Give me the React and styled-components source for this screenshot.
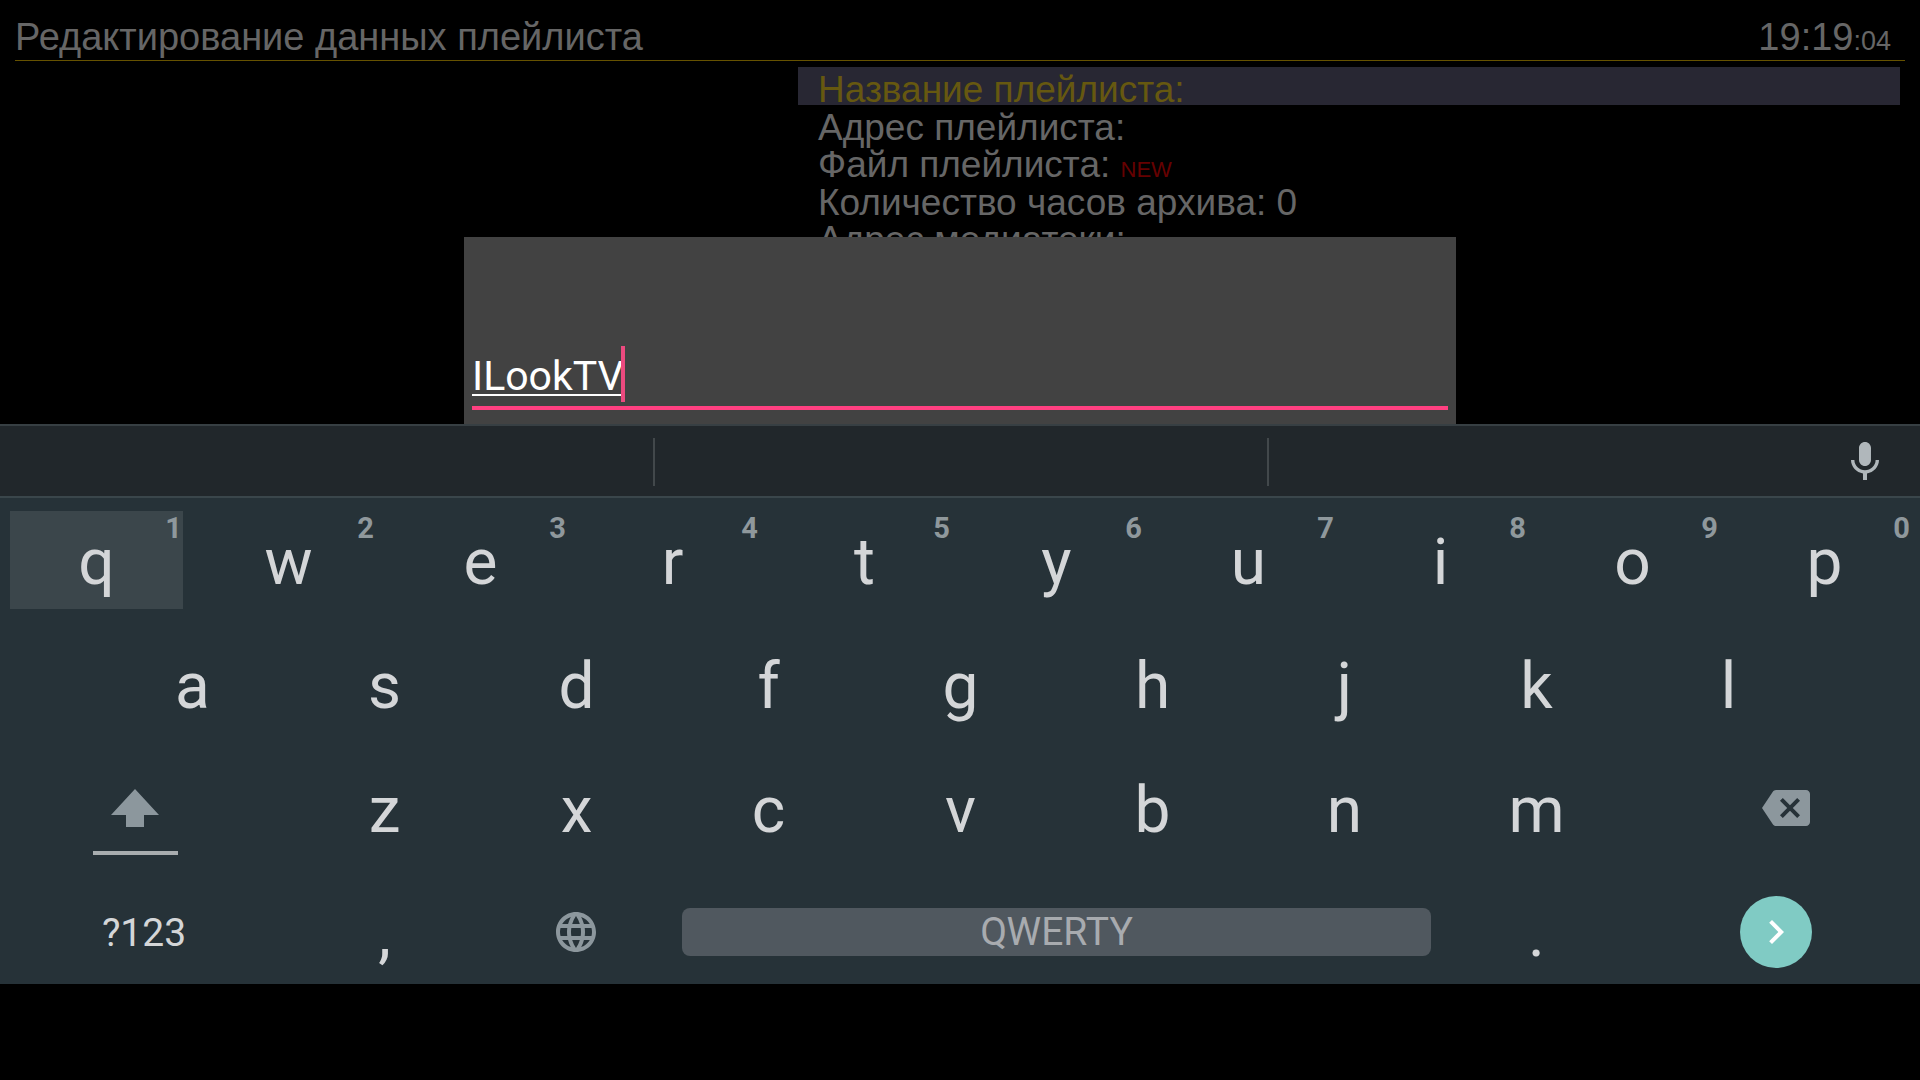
import React, { useState } from "react";
import styled, { createGlobalStyle } from "styled-components";

const GlobalStyle = createGlobalStyle`
  * { box-sizing: border-box; }
  body { margin: 0; background: #000; }
  button, input { font: inherit; color: inherit; background: none; border: 0; padding: 0; margin: 0; outline: none; }
`;

const Page = styled.div`
  display: flex;
  flex-direction: column;
  height: 100vh;
  padding-bottom: 96px;
  background: #000;
  overflow: hidden;
`;

const Backdrop = styled.main`
  position: relative;
  flex: 1;
  min-height: 0;
  overflow: hidden;
  color: #666;
  font-family: "Liberation Sans", Arial, sans-serif;
  font-size: 37px;
`;

const Header = styled.header`
  display: flex;
  justify-content: space-between;
  align-items: baseline;
  height: 61px;
  margin: 0 15px;
  padding-top: 16px;
  border-bottom: 1px solid #665200;
  font-size: 38px;
  line-height: 42px;
`;

const Title = styled.h1`
  margin: 0;
  font-size: 38px;
  font-weight: 400;
`;

const Clock = styled.time`
  padding-right: 14px;
`;

const Seconds = styled.span`
  font-size: 27px;
`;

const SettingsArea = styled.section`
  padding: 6px 20px 0 0;
`;

const SettingsList = styled.ul`
  display: grid;
  grid-template-rows: repeat(5, minmax(0, 1fr));
  height: 188px;
  margin: 0 0 0 42%;
  padding: 0;
  list-style: none;
`;

const Setting = styled.button`
  display: block;
  width: 100%;
  height: 100%;
  padding: 6px 0 0 20px;
  line-height: 34px;
  text-align: left;
  color: ${(p) => (p.$selected ? "#665810" : "inherit")};
  background: ${(p) => (p.$selected ? "#282733" : "transparent")};
`;

const NewTag = styled.span`
  font-size: 22px;
  line-height: 22px;
  color: #660000;
`;

const DialogLayer = styled.div`
  position: absolute;
  inset: 0;
  display: flex;
  align-items: flex-end;
  justify-content: center;
`;

const Dialog = styled.div`
  display: flex;
  flex-direction: column;
  justify-content: flex-end;
  width: 100%;
  max-width: 992px;
  height: 187px;
  padding: 0 8px 14px;
  background: #424242;
`;

const Field = styled.label`
  display: flex;
  align-items: center;
  height: 64px;
  padding-bottom: 4px;
  border-bottom: 4px solid #ff4081;
  color: #fff;
  font-family: Roboto, sans-serif;
  font-size: 41px;
`;

const FieldInput = styled.input`
  field-sizing: content;
  height: 56px;
  padding-top: 4px;
  text-decoration: underline;
  text-decoration-thickness: 2px;
  text-underline-offset: 4px;
  caret-color: transparent;
`;

const Caret = styled.span`
  width: 4px;
  height: 56px;
  margin-left: -3px;
  background: #ec4a7f;
`;

const Keyboard = styled.section`
  color: #d4d6d8;
  background: #263238;
  font-family: Roboto, sans-serif;
  font-size: 64px;
`;

const Suggestions = styled.div`
  display: grid;
  grid-template-columns: 34fr 32fr 34fr;
  align-items: center;
  height: 74px;
  padding-top: 2px;
  border-top: 2px solid #373f43;
  border-bottom: 2px solid #3a464b;
  background: #21272b;
`;

const Suggestion = styled.div`
  display: flex;
  align-items: center;
  justify-content: flex-end;
  height: 48px;
  padding-right: 31px;
  border-left: ${(p) => (p.$divided ? "2px solid #42484b" : "0")};
`;

const IconButton = styled.button`
  display: flex;
  padding-bottom: 4px;
  color: #b0b7bb;
`;

const Rows = styled.div`
  display: grid;
  grid-auto-rows: 98px;
  gap: 26px;
  padding: 13px 0 3px;
`;

const Row = styled.div`
  display: grid;
  grid-template-columns: ${(p) => p.$columns};
  padding: 0 ${(p) => p.$inset || "0"};
`;

const Key = styled.button`
  position: relative;
  display: flex;
  flex-direction: column;
  align-items: center;
  justify-content: center;
  margin: 0 9px 0 10px;
  padding-top: 6px;
  line-height: 76px;
  background: ${(p) => (p.$pressed ? "#3b464b" : "transparent")};
`;

const Hint = styled.span`
  position: absolute;
  top: 0;
  right: 1px;
  font-size: 29px;
  font-weight: 700;
  line-height: 34px;
  color: #8f989c;
`;

const SideKey = styled(Key)`
  margin: ${(p) => (p.$end ? "0 0 0 20px" : "0 18px 0 0")};
  padding: 0;
  color: #8c979d;
`;

const ShiftBar = styled.span`
  position: absolute;
  bottom: 2px;
  width: 85px;
  height: 4px;
  background: #a8adaf;
`;

const SmallKey = styled(Key)`
  margin: 0;
  padding-top: 2px;
  font-size: 39px;
`;

const GlobeKey = styled(Key)`
  margin: 0 10px;
  padding: 0;
  color: #8c979d;
`;

const SpaceKey = styled(Key)`
  align-self: center;
  height: 48px;
  padding: 0;
  border-radius: 8px;
  font-size: 39px;
  line-height: 48px;
  color: #a8abaf;
  background: #50585f;
`;

const EnterKey = styled.button`
  display: flex;
  align-items: center;
  justify-content: center;
  place-self: center;
  width: 72px;
  height: 72px;
  border-radius: 50%;
  color: #fff;
  background: #80cbc4;
`;

const Icon = ({ path }) => (
  <svg width="48" height="48" viewBox="0 0 24 24" fill="currentColor" aria-hidden="true">
    <path d={path} />
  </svg>
);

const micPath =
  "M12 15c1.66 0 2.99-1.34 2.99-3L15 6c0-1.66-1.34-3-3-3S9 4.34 9 6v6c0 1.66 1.34 3 3 3zm5.3-3c0 3-2.54 5.1-5.3 5.1S6.7 15 6.7 12H5c0 3.42 2.72 6.23 6 6.72V22h2v-3.28c3.28-.48 6-3.3 6-6.72h-1.7z";
const globePath =
  "M11.99 2C6.47 2 2 6.48 2 12s4.47 10 9.99 10C17.52 22 22 17.52 22 12S17.52 2 11.99 2zm6.93 6h-2.95a15.65 15.65 0 0 0-1.38-3.56A8.03 8.03 0 0 1 18.92 8zM12 4.04c.83 1.2 1.48 2.53 1.91 3.96h-3.82c.43-1.43 1.08-2.76 1.91-3.96zM4.26 14C4.1 13.36 4 12.69 4 12s.1-1.36.26-2h3.38c-.08.66-.14 1.32-.14 2 0 .68.06 1.34.14 2H4.26zm.82 2h2.95c.32 1.25.78 2.45 1.38 3.56A7.987 7.987 0 0 1 5.08 16zm2.95-8H5.08a7.987 7.987 0 0 1 4.33-3.56A15.65 15.65 0 0 0 8.03 8zM12 19.96c-.83-1.2-1.48-2.53-1.91-3.96h3.82c-.43 1.43-1.08 2.76-1.91 3.96zM14.34 14H9.66c-.09-.66-.16-1.32-.16-2 0-.68.07-1.35.16-2h4.68c.09.65.16 1.32.16 2 0 .68-.07 1.34-.16 2zm.25 5.56c.6-1.11 1.06-2.31 1.38-3.56h2.95a8.03 8.03 0 0 1-4.33 3.56zM16.36 14c.08-.66.14-1.32.14-2 0-.68-.06-1.34-.14-2h3.38c.16.64.26 1.31.26 2s-.1 1.36-.26 2h-3.38z";
const backspacePath =
  "M22 3H7c-.69 0-1.23.35-1.59.88L0 12l5.41 8.11c.36.53.9.89 1.59.89h15c1.1 0 2-.9 2-2V5c0-1.1-.9-2-2-2zm-3 12.59L17.59 17 14 13.41 10.41 17 9 15.59 12.59 12 9 8.41 10.41 7 14 10.59 17.59 7 19 8.41 15.41 12 19 15.59z";
const chevronPath = "M10 6 8.59 7.41 13.17 12l-4.58 4.59L10 18l6-6z";

const ShiftIcon = () => (
  <svg width="48" height="38" viewBox="0 0 48 38" fill="currentColor" aria-hidden="true">
    <path d="M24 0 48 26H33V38H15V26H0Z" />
  </svg>
);

const settings = [
  { label: "Название плейлиста:" },
  { label: "Адрес плейлиста:" },
  { label: "Файл плейлиста:", isNew: true },
  { label: "Количество часов архива: 0" },
  { label: "Адрес медиатеки:" },
];

export default function App() {
  const [name, setName] = useState("ILookTV");
  return (
    <Page>
      <GlobalStyle />
      <Backdrop>
        <Header>
          <Title>Редактирование данных плейлиста</Title>
          <Clock>
            19:19<Seconds>:04</Seconds>
          </Clock>
        </Header>
        <SettingsArea>
          <SettingsList>
            {settings.map((item, i) => (
              <li key={item.label}>
                <Setting $selected={i === 0}>
                  {item.label} {item.isNew && <NewTag>NEW</NewTag>}
                </Setting>
              </li>
            ))}
          </SettingsList>
        </SettingsArea>
        <DialogLayer>
          <Dialog role="dialog" aria-label="Название плейлиста">
            <Field>
              <FieldInput
                aria-label="Название плейлиста"
                value={name}
                spellCheck={false}
                onChange={(e) => setName(e.target.value)}
              />
              <Caret />
            </Field>
          </Dialog>
        </DialogLayer>
      </Backdrop>
      <Keyboard>
        <Suggestions>
          <Suggestion />
          <Suggestion $divided />
          <Suggestion $divided>
            <IconButton aria-label="Голосовой ввод">
              <Icon path={micPath} />
            </IconButton>
          </Suggestion>
        </Suggestions>
        <Rows>
          <Row $columns="repeat(10, 1fr)">
            {[..."qwertyuiop"].map((k, i) => (
              <Key key={k} $pressed={i === 0}>
                {k}
                <Hint>{(i + 1) % 10}</Hint>
              </Key>
            ))}
          </Row>
          <Row $columns="repeat(9, 1fr)" $inset="5%">
            {[..."asdfghjkl"].map((k) => (
              <Key key={k}>{k}</Key>
            ))}
          </Row>
          <Row $columns="3fr repeat(7, 2fr) 3fr">
            <SideKey aria-label="Shift">
              <ShiftIcon />
              <ShiftBar />
            </SideKey>
            {[..."zxcvbnm"].map((k) => (
              <Key key={k}>{k}</Key>
            ))}
            <SideKey $end aria-label="Backspace">
              <Icon path={backspacePath} />
            </SideKey>
          </Row>
          <Row $columns="3fr 2fr 2fr 8fr 2fr 3fr">
            <SmallKey>?123</SmallKey>
            <Key>,</Key>
            <GlobeKey aria-label="Язык">
              <Icon path={globePath} />
            </GlobeKey>
            <SpaceKey>QWERTY</SpaceKey>
            <Key>.</Key>
            <EnterKey aria-label="Enter">
              <Icon path={chevronPath} />
            </EnterKey>
          </Row>
        </Rows>
      </Keyboard>
    </Page>
  );
}
